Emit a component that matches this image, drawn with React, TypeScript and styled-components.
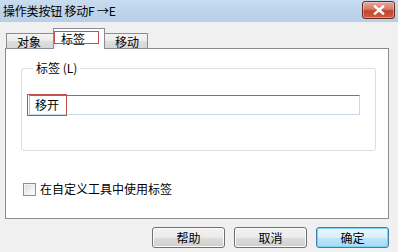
import React from 'react';
import styled, { createGlobalStyle } from 'styled-components';

const GlobalStyle = createGlobalStyle`
  html, body {
    margin: 0;
    padding: 0;
    background: #f0f0f0;
  }
  body {
    font-family: "Noto Sans CJK SC", "DejaVu Sans", sans-serif;
    font-size: 12px;
    color: #000;
  }
`;

const Window = styled.div`
  width: 398px;
  height: 252px;
  background: #f0f0f0;
  display: flex;
  flex-direction: column;
  overflow: hidden;
`;

const TitleBar = styled.div`
  height: 22px;
  display: flex;
  align-items: center;
  justify-content: space-between;
  padding: 0 3px 0 3px;
  background: linear-gradient(to bottom, #c9dcf0 0%, #bcd3ea 60%, #b6cfe8 100%);
`;

const Title = styled.span`
  font-size: 12px;
  line-height: 16px;
  letter-spacing: -0.2px;
`;

const CloseButton = styled.div`
  width: 31px;
  height: 16px;
  margin-top: -2px;
  border: 1px solid #6b2a22;
  border-radius: 3px;
  background: linear-gradient(to bottom, #e6a89a 0%, #d67b69 45%, #c2452e 55%, #cf5d40 100%);
  display: flex;
  align-items: center;
  justify-content: center;
  box-shadow: inset 0 0 0 1px rgba(255, 255, 255, 0.35);
`;

const Body = styled.div`
  flex: 1;
  display: flex;
  flex-direction: column;
  padding: 7px 9px 0 5px;
`;

const TabStrip = styled.div`
  display: flex;
  align-items: flex-end;
  padding-left: 1px;
  height: 20px;
  position: relative;
  z-index: 1;
  margin-bottom: -1px;
`;

const Tab = styled.div<{ $active?: boolean; $w: number }>`
  position: relative;
  box-sizing: border-box;
  width: ${p => p.$w}px;
  height: ${p => (p.$active ? 21 : 16)}px;
  border: 1px solid #898c95;
  border-bottom: ${p => (p.$active ? 'none' : '1px solid #898c95')};
  margin-left: ${p => (p.$active ? -1 : 0)}px;
  margin-right: ${p => (p.$active ? -1 : 0)}px;
  z-index: ${p => (p.$active ? 2 : 0)};
  background: ${p =>
    p.$active ? '#ffffff' : 'linear-gradient(to bottom, #f3f3f3 0%, #ebebeb 50%, #dedede 51%, #d7d7d7 100%)'};
  display: flex;
  align-items: flex-start;
  padding-left: ${p => (p.$active ? 7 : 10)}px;
  padding-top: ${p => (p.$active ? 2 : 0)}px;
  font-size: 12px;
  line-height: 15px;
`;

const TabMark = styled.span`
  position: absolute;
  left: 0;
  top: 2px;
  width: 43px;
  height: 11px;
  border: 1px solid #c0504d;
`;

const Panel = styled.div`
  height: 171px;
  box-sizing: border-box;
  background: #fff;
  border: 1px solid #898c95;
  display: flex;
  flex-direction: column;
  padding: 12px 12px 0 15px;
`;

const Group = styled.fieldset`
  margin: 0;
  height: 90px;
  box-sizing: border-box;
  border: 1px solid #d5dfe5;
  border-radius: 3px;
  padding: 20px 15px 0 7px;
`;

const Legend = styled.legend`
  padding: 0 3px;
  margin-left: 4px;
  font-size: 12px;
  line-height: 14px;
`;

const InputWrap = styled.div`
  position: relative;
`;

const TextBox = styled.div`
  height: 20px;
  box-sizing: border-box;
  border: 1px solid #c5d9ea;
  border-top-color: #5c7c9c;
  border-left-color: #a6c1d9;
  padding: 0 5px;
  font-size: 12px;
  line-height: 18px;
  background: #fff;
`;

const InputMark = styled.span`
  position: absolute;
  left: -2px;
  top: -1px;
  width: 38px;
  height: 20px;
  border: 1px solid #c0504d;
`;

const CheckRow = styled.label`
  display: flex;
  align-items: center;
  gap: 4px;
  margin-top: 31px;
  margin-left: 2px;
  font-size: 12px;
  line-height: 14px;
`;

const CheckBox = styled.span`
  width: 13px;
  height: 13px;
  box-sizing: border-box;
  border: 1px solid #8e8f8f;
  background: linear-gradient(135deg, #d9d9d9 0%, #f2f2f2 60%, #ffffff 100%);
  box-shadow: inset 0 0 0 1px #f4f4f4;
`;

const ButtonRow = styled.div`
  display: flex;
  justify-content: flex-end;
  gap: 9px;
  margin-top: 8px;
  padding-right: 0;
`;

const Button = styled.div<{ $default?: boolean }>`
  width: 73px;
  height: 21px;
  box-sizing: border-box;
  border: 1px solid ${p => (p.$default ? '#3c7fb1' : '#707070')};
  border-radius: 3px;
  background: ${p =>
    p.$default
      ? 'linear-gradient(to bottom, #eaf6fd 0%, #d9f0fc 50%, #bee6fd 51%, #a7d9f5 100%)'
      : 'linear-gradient(to bottom, #f2f2f2 0%, #ebebeb 50%, #dddddd 51%, #cfcfcf 100%)'};
  box-shadow: inset 0 0 0 1px ${p => (p.$default ? '#7fd0f5' : '#fcfcfc')};
  display: flex;
  align-items: center;
  justify-content: center;
  font-size: 12px;
  line-height: 14px;
`;

export default function App() {
  return (
    <Window>
      <GlobalStyle />
      <TitleBar>
        <Title>操作类按钮 移动F →E</Title>
        <CloseButton>
          <svg width="12" height="10" viewBox="0 0 12 10">
            <path d="M2 1.5 L10 8.5 M10 1.5 L2 8.5" stroke="#fff" strokeWidth="2.4" strokeLinecap="square" />
          </svg>
        </CloseButton>
      </TitleBar>
      <Body>
        <TabStrip>
          <Tab $w={48}>对象</Tab>
          <Tab $active $w={52}>
            标签
            <TabMark />
          </Tab>
          <Tab $w={44}>移动</Tab>
        </TabStrip>
        <Panel>
          <Group>
            <Legend>标签 (L)</Legend>
            <InputWrap>
              <TextBox>移开</TextBox>
              <InputMark />
            </InputWrap>
          </Group>
          <CheckRow>
            <CheckBox />
            在自定义工具中使用标签
          </CheckRow>
        </Panel>
        <ButtonRow>
          <Button>帮助</Button>
          <Button>取消</Button>
          <Button $default>确定</Button>
        </ButtonRow>
      </Body>
    </Window>
  );
}
